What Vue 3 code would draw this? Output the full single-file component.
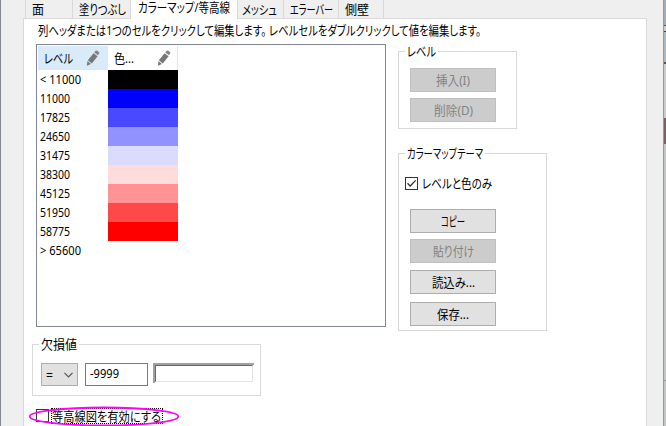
<script setup>
import { h } from 'vue'

// Single-line label condensed to a given width, like the narrow kana of the dialog font.
const T = (p) =>
  h('svg', { class: 'txt', width: p.w, height: 16, overflow: 'visible' }, [
    h('text', { x: 0, y: 12.5, textLength: p.w, lengthAdjust: 'spacingAndGlyphs', fill: 'currentColor' }, p.t),
  ])
T.props = ['t', 'w']

const tabs = [
  { t: '面', w: 12, size: 47, pad: 6 },
  { t: '塗りつぶし', w: 47, size: 58, pad: 6 },
  { t: 'カラーマップ/等高線', w: 92, size: 107, pad: 7, on: true },
  { t: 'メッシュ', w: 35, size: 46, pad: 4 },
  { t: 'エラーバー', w: 43, size: 55, pad: 6 },
  { t: '側壁', w: 24, size: 46, pad: 6 },
]
const rows = [
  ['< 11000', 41, '#000000'],
  ['11000', 30, '#0000ff'],
  ['17825', 30, '#4949ff'],
  ['24650', 30, '#9292ff'],
  ['31475', 30, '#dbdbff'],
  ['38300', 30, '#ffdbdb'],
  ['45125', 30, '#ff9292'],
  ['51950', 30, '#ff4949'],
  ['58775', 30, '#ff0000'],
  ['> 65600', 41, 'transparent'],
]
const heads = [
  { t: 'レベル', w: 29 },
  { t: '色...', w: 20 },
]
</script>

<template>
  <div class="screen">
    <div class="window">
      <nav class="tabs">
        <div v-for="t in tabs" :key="t.t" class="tab" :class="{ on: t.on }" :style="{ width: t.size + 'px', paddingLeft: t.pad + 'px' }">
          <T :t="t.t" :w="t.w" />
        </div>
      </nav>
      <main class="pane">
        <div class="hint">
          <T t="列ヘッダまたは1つのセルをクリックして編集します。 レベルセルをダブルクリックして値を編集します。" :w="443" />
        </div>
        <div class="upper">
          <div class="list">
            <div class="head">
              <div v-for="(c, i) in heads" :key="c.t" class="th" :class="{ hot: i === 0 }">
                <T :t="c.t" :w="c.w" />
                <svg class="pencil" width="14" height="17" viewBox="0 0 14 17">
                  <path d="M8.2 2.4 9.6 .8Q10.4.1 11.3.7L12.9 1.9Q13.6 2.6 13.1 3.5L12 5.3Z" fill="#858585" />
                  <path d="M7.5 3.2 11.6 6.2 5.8 13.5 1.9 10.3Z" fill="#777" />
                  <path d="M1.5 11 4.9 13.9 .8 15.7Z" fill="#777" />
                </svg>
              </div>
            </div>
            <div v-for="r in rows" :key="r[0]" class="row">
              <div class="level"><T :t="r[0]" :w="r[1]" /></div>
              <div class="swatch" :style="{ background: r[2] }"></div>
            </div>
          </div>
          <div class="side">
            <section class="group level-group">
              <div class="legend"><T t="レベル" :w="29" /></div>
              <div class="buttons">
                <button class="btn" disabled><T t="挿入(I)" :w="34" /></button>
                <button class="btn" disabled><T t="削除(D)" :w="39" /></button>
              </div>
            </section>
            <section class="group theme-group">
              <div class="legend"><T t="カラーマップテーマ" :w="76" /></div>
              <label class="only">
                <span class="box"><svg width="11" height="11" viewBox="0 0 11 11"><path d="M1.5 5.3 4.2 8 9.7 2.4" fill="none" stroke="#333" stroke-width="1.3" /></svg></span>
                <T t="レベルと色のみ" :w="70" />
              </label>
              <div class="buttons theme-buttons">
                <button class="btn"><T t="コピー" :w="24" /></button>
                <button class="btn" disabled><T t="貼り付け" :w="41" /></button>
                <button class="btn load"><T t="読込み..." :w="43" /></button>
                <button class="btn save"><T t="保存..." :w="32" /></button>
              </div>
            </section>
          </div>
        </div>
        <section class="group missing">
          <div class="legend"><T t="欠損値" :w="36" /></div>
          <div class="fields">
            <div class="select">
              <T t="=" :w="7" />
              <svg width="9" height="6" viewBox="0 0 9 6"><path d="M.5.8 4.5 4.8 8.5.8" fill="none" stroke="#555" stroke-width="1.2" /></svg>
            </div>
            <div class="input"><T t="-9999" :w="29" /></div>
            <div class="sunken"><div></div></div>
          </div>
        </section>
        <div class="enable">
          <span class="box"></span>
          <span class="focus"><T t="等高線図を有効にする" :w="109" /></span>
          <svg class="ring" width="154" height="22" viewBox="0 0 154 22"><ellipse cx="77" cy="10.5" rx="74.3" ry="9" fill="none" stroke="#ff00ff" stroke-width="1.8" /></svg>
        </div>
      </main>
    </div>
    <div class="behind"></div>
  </div>
</template>

<style>
body { overflow: hidden; }
</style>

<style scoped>
* { box-sizing: border-box; }
.screen { display: flex; width: 666px; height: 426px; overflow: hidden; color: #000; font: 12.6px "Noto Sans", "Noto Sans CJK JP", sans-serif; font-feature-settings: "palt"; }
.txt { display: block; flex: none; }
.window { width: 664px; background: #efefef; border-left: 1px solid #838793; border-right: 1px solid #969998; }
.behind { width: 2px; background: linear-gradient(#a0aebb 0 25px, #555 25px 26px, #ccc 26px 31px, #444 31px 32px, #a9b9c6 32px 62px, #555 62px 64px, #ccc 64px 118px, #805f60 118px 144px, #c4c6c5 144px 380px, #999 380px 381px, #c4c6c5 381px); }
.tabs { display: flex; height: 19px; padding-left: 24px; position: relative; }
.tab { height: 18px; padding-top: 1px; border-left: 1px solid #d9d9d9; }
.tab:last-child { border-right: 1px solid #d9d9d9; }
.tab.on { height: 19px; background: #fff; }
.tab.on .txt { margin-top: -2px; }
.pane { width: 624px; height: 409px; margin: -1px 0 0 22px; border: 1px solid #d9d9d9; border-bottom: 0; background: #fff; }
.hint { height: 25px; padding: 3px 0 0 14px; }
.upper { display: flex; gap: 12px; height: 283px; padding-left: 12px; }
.list { width: 350px; height: 283px; border: 1px solid #838793; padding: 1px; }
.head { display: flex; height: 24px; }
.th { display: flex; justify-content: space-between; align-items: center; width: 70px; padding: 0 6px; border-right: 1px solid #e5e5e5; }
.th.hot { padding-right: 7px; background: #d9eaf9; border-right-color: #d9eaf9; }
.row { display: flex; height: 19px; }
.level { width: 70px; padding: 1px 0 0 2px; }
.swatch { width: 70px; }
.side { padding-top: 7px; }
.group { border: 1px solid #d9d9d9; }
.legend { width: max-content; height: 16px; margin: -9px 0 0 6px; padding: 0 2px; background: #fff; }
.level-group { width: 119px; height: 78px; }
.theme-group { width: 149px; height: 178px; margin-top: 24px; }
.buttons { display: flex; flex-direction: column; gap: 6px; padding: 9px 0 0 11px; }
.btn { display: flex; justify-content: center; align-items: center; width: 86px; height: 24px; padding: 0 0 1px; border: 1px solid #adadad; background: #e1e1e1; color: #000; font: inherit; font-feature-settings: inherit; }
.btn:disabled { border-color: #bfbfbf; background: #ccc; color: #838383; }
.only { display: flex; gap: 4px; align-items: center; padding: 14px 0 0 6px; }
.theme-buttons { padding-top: 18px; }
.load { margin-top: 1px; }
.save { margin-top: 2px; }
.box { width: 13px; height: 13px; flex: none; border: 1px solid #333; background: #fff; }
.box svg { display: block; }
.missing { width: 229px; height: 52px; margin: 17px 0 0 8px; }
.fields { display: flex; padding: 11px 0 0 8px; }
.select { display: flex; justify-content: space-between; align-items: center; width: 37px; height: 23px; padding: 0 4px; border: 1px solid #adadad; background: #e1e1e1; }
.input { width: 63px; height: 23px; margin-left: 7px; padding: 1px 0 0 4px; border: 1px solid #7a7a7a; }
.sunken { width: 101px; height: 20px; margin-left: 5px; border-top: 2px solid #a0a0a0; border-left: 2px solid #a0a0a0; }
.sunken div { width: 98px; height: 17px; border: 1px solid; border-color: #696969 #e3e3e3 #e3e3e3 #696969; }
.enable { display: flex; position: relative; align-items: flex-start; height: 16px; margin: 12px 0 0 12px; }
.enable .box { margin-top: 1px; }
.focus { width: 112px; height: 16px; margin-left: 2px; border: 1px dotted #000; }
.focus .txt { margin-top: -1px; }
.ring { position: absolute; left: -9px; top: -2px; }
</style>
